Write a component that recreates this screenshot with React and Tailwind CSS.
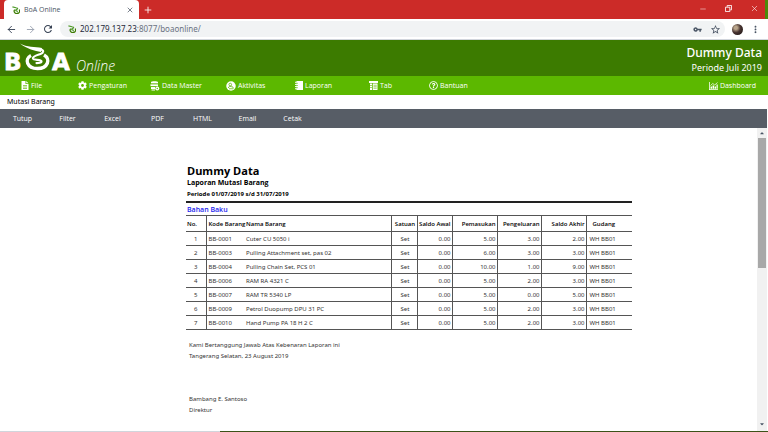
import React, { useState } from 'react';
import { ArrowLeft, ArrowRight, Minus, Plus, X } from 'lucide-react';
import { FaCaretDown, FaCaretUp, FaCog, FaRegQuestionCircle } from 'react-icons/fa';
import { MdRefresh, MdStarBorder, MdMoreVert, MdVpnKey } from 'react-icons/md';

const FileIcon = () => (
  <svg viewBox="0 0 16 18" className="h-[9px] w-2" fill="currentColor">
    <path d="M1 0h8v6h6v12H1zM10.500 0L15 4.500h-4.500z" />
    <path d="M4 9h8M4 12h8M4 15h8" stroke="#5cb800" strokeWidth="1.300" />
  </svg>
);

const DatabaseIcon = () => (
  <svg viewBox="0 0 20 20" className="h-[10px] w-[10px]" fill="currentColor">
    <path d="M2 2c0-2 14-2 14 0v3H2zM1 6.500h15v4H1zM2 12h8v4H2zM3 17h7v2H3z" />
    <circle cx="14.500" cy="15" r="4" />
    <circle cx="14.500" cy="15" r="1.400" fill="#5cb800" />
    <path d="M1 5.700h15M1 11.200h12" stroke="#5cb800" strokeWidth="1" />
  </svg>
);

const ActivityIcon = () => (
  <svg viewBox="0 0 20 20" className="h-[10px] w-[10px]">
    <circle cx="10" cy="10" r="9.500" fill="currentColor" />
    <g fill="none" stroke="#5cb800" strokeWidth="1.500">
      <circle cx="8.500" cy="7" r="2.600" />
      <path d="M4.500 14c0-4 7-4 8-1M10.500 9.500l5 4.500M6 15.500h9" />
    </g>
  </svg>
);

const NotebookIcon = () => (
  <svg viewBox="0 0 16 18" className="h-[9px] w-2" fill="currentColor">
    <path d="M3 0h13v18H3z" />
    <path d="M0 2.500h5M0 6.800h5M0 11.200h5M0 15.500h5" stroke="currentColor" strokeWidth="2" />
    <path d="M3 4.600h2.500M3 9h2.500M3 13.400h2.500" stroke="#5cb800" strokeWidth="1.500" />
  </svg>
);

const TabIcon = () => (
  <svg viewBox="0 0 18 18" className="h-[9px] w-[9px]" fill="currentColor">
    <path d="M0 0h18v4H0zM2 5h4v13H2zM7.500 5H17v13H7.500z" />
    <path d="M9 8.500h6.500M9 11.500h6.500M9 14.500h6.500M2 9h4M2 13h4" stroke="#5cb800" strokeWidth="1.200" />
  </svg>
);

const ChartIcon = () => (
  <svg viewBox="0 0 18 16" className="h-2 w-[9px]" fill="currentColor">
    <path d="M0 0h1.500v14.500H18V16H0zM3 9h3v4.500H3zM7 7h3v6.500H7zM11 9h3v4.500h-3zM15 5h2.500v8.500H15z" />
    <path d="M3 7l4.500-4 4 3L17 1" fill="none" stroke="currentColor" strokeWidth="1.500" />
  </svg>
);

const BoaIcon = () => (
  <svg viewBox="0 0 18 18" className="h-2 w-2 shrink-0" fill="none" stroke="#3c7b00">
    <path d="M6 8c-3 4 0 9 5 9s8-5 5-9" strokeWidth="2.800" />
    <path d="M1 2l8 2c6 1 4 3 1 4s-2 3 0 3 3 2 1 3" strokeWidth="2.500" stroke="#4f9a2a" />
  </svg>
);

const Logo = () => (
  <svg viewBox="0 0 70 32" className="h-8 w-[70px] overflow-visible" fill="#fff" role="img" aria-label="BoA">
    <g fontFamily="DejaVu Sans" fontWeight="700" fontSize="23" stroke="#fff" strokeWidth=".8">
      <text x="-2" y="28">B</text>
      <text x="46" y="28">A</text>
    </g>
    <path d="M25 13.500C18 17 21 26.500 31.500 26.500S45 17 38 13" fill="none" stroke="#fff" strokeWidth="3.400" />
    <path d="M14 1.500c7 4.200 15 3 22 4.400l-1 4C29 9 21 7 14 1.500z" />
    <path d="M34.500 7.500c4 .5 3 3.500 0 4.500s-8 2-7.500 4.500c.5 2 8 .6 8.500 2.800.2 1.500-3 1.800-5 1.800" fill="none" stroke="#fff" strokeWidth="2.200" strokeLinecap="round" />
  </svg>
);

const MENU = [
  { label: 'File', icon: <FileIcon />, width: 'w-[57px]' },
  { label: 'Pengaturan', icon: <FaCog className="h-[9px] w-[9px]" />, width: 'w-[72px]' },
  { label: 'Data Master', icon: <DatabaseIcon />, width: 'w-[76px]' },
  { label: 'Aktivitas', icon: <ActivityIcon />, width: 'w-[69px]' },
  { label: 'Laporan', icon: <NotebookIcon />, width: 'w-[74px]' },
  { label: 'Tab', icon: <TabIcon />, width: 'w-[60px]' },
  { label: 'Bantuan', icon: <FaRegQuestionCircle className="h-[9px] w-[9px]" />, width: 'w-[60px]' },
];

const ACTIONS = ['Tutup', 'Filter', 'Excel', 'PDF', 'HTML', 'Email', 'Cetak'];

const ROWS = [
  { code: 'BB-0001', name: 'Cuter CU 5050 i', values: [0, 5, 3, 2] },
  { code: 'BB-0003', name: 'Pulling Attachment set, pas 02', values: [0, 6, 3, 3] },
  { code: 'BB-0004', name: 'Pulling Chain Set, PCS 01', values: [0, 10, 1, 9] },
  { code: 'BB-0006', name: 'RAM RA 4321 C', values: [0, 5, 2, 3] },
  { code: 'BB-0007', name: 'RAM TR 5340 LP', values: [0, 5, 0, 5] },
  { code: 'BB-0009', name: 'Petrol Duopump DPU 31 PC', values: [0, 5, 2, 3] },
  { code: 'BB-0010', name: 'Hand Pump PA 18 H 2 C', values: [0, 5, 2, 3] },
];

const BrowserBar = () => {
  const [url, setUrl] = useState('202.179.137.23:8077/boaonline/');
  const hostEnd = url.indexOf(':');

  return (
    <div>
      <div className="flex h-[19px] items-end justify-between bg-[#cc2b28] pl-1">
        <div className="flex h-full items-center">
          <div className="flex h-full w-[135px] items-center rounded-t-[4px] bg-white pl-2 pr-[5px]">
            <BoaIcon />
            <span className="ml-1 flex-1 text-[7px] text-gray-600">BoA Online</span>
            <button aria-label="Close tab" className="text-gray-700"><X size={8} /></button>
          </div>
          <button aria-label="New tab" className="ml-1 text-white"><Plus size={10} /></button>
        </div>
        <div className="flex h-full items-center text-white">
          <button aria-label="Minimize" className="mr-[18px] pb-[2px]"><Minus size={8} strokeWidth={1.5} /></button>
          <button aria-label="Restore" className="mr-[18px] pb-[2px]">
            <svg viewBox="0 0 8 8" className="h-[7px] w-[7px]" fill="none" stroke="currentColor">
              <path d="M.5 2.500h5v5h-5zM2.500 2V.5h5v5H6" />
            </svg>
          </button>
          <button aria-label="Close" className="mr-[6px] pb-[2px]"><X size={9} strokeWidth={1.5} /></button>
          <div className="h-full w-[3px] bg-[#4c8a0a]" />
        </div>
      </div>
      <div className="flex h-[21px] items-center border-b border-gray-300 bg-white pl-[6px] text-gray-600">
        <button aria-label="Back" className="mr-2 text-gray-700"><ArrowLeft size={11} /></button>
        <button aria-label="Forward" className="mr-[6px] text-gray-400"><ArrowRight size={11} /></button>
        <button aria-label="Reload" className="text-gray-700"><MdRefresh size={12} /></button>
        <div className="ml-[6px] flex h-4 flex-1 items-center rounded-full bg-[#f1f3f4] px-2">
          <BoaIcon />
          <label className="relative ml-1 flex flex-1 items-center font-['Noto_Sans',sans-serif] text-[8px] leading-[12px]">
            <span className="text-gray-500" aria-hidden="true">
              <span className="text-gray-800">{url.slice(0, hostEnd)}</span>{url.slice(hostEnd)}
            </span>
            <input
              aria-label="Address"
              className="absolute inset-0 w-full bg-transparent text-transparent outline-none"
              value={url}
              onChange={(e) => setUrl(e.target.value)}
            />
          </label>
          <MdVpnKey size={9} />
          <MdStarBorder size={11} className="ml-2 -mr-1" />
        </div>
        <div className="ml-[7px] h-[11px] w-[11px] rounded-full bg-[radial-gradient(circle_at_35%_35%,#b9a58b_15%,#4a3632_45%,#241a18_80%)]" />
        <button aria-label="Menu" className="mx-[7px]"><MdMoreVert size={11} /></button>
      </div>
    </div>
  );
};

const ReportTable = () => {
  const cell = 'border-b border-r border-[#555]';

  return (
    <table className="w-full table-fixed border-collapse border-t border-[#555] text-[6px] leading-[8px] whitespace-nowrap">
      <colgroup>
        <col className="w-[20px]" />
        <col className="w-[40px]" />
        <col className="w-[145px]" />
        <col className="w-[26px]" />
        <col className="w-[35px]" />
        <col className="w-[45px]" />
        <col className="w-[44px]" />
        <col className="w-[45px]" />
        <col />
      </colgroup>
      <thead>
        <tr className="h-4 text-left *:font-semibold">
          <th className={`${cell} pl-px`}>No.</th>
          <th className="border-b border-[#555] pl-[2px]">Kode Barang</th>
          <th className={cell}>Nama Barang</th>
          <th className={`${cell} pl-[2px] text-center`}>Satuan</th>
          <th className={`${cell} pr-px text-right`}>Saldo Awal</th>
          <th className={`${cell} pr-px text-right`}>Pemasukan</th>
          <th className={`${cell} pr-px text-right`}>Pengeluaran</th>
          <th className={`${cell} pr-px text-right`}>Saldo Akhir</th>
          <th className="border-b border-[#555] pl-[6px]">Gudang</th>
        </tr>
      </thead>
      <tbody className="font-['Noto_Sans',sans-serif] text-[#333]">
        {ROWS.map((row, i) => (
          <tr key={row.code} className="h-[14px]">
            <td className={`${cell} text-center`}>{i + 1}</td>
            <td className="border-b border-[#555] pl-[2px]">{row.code}</td>
            <td className={cell}>{row.name}</td>
            <td className={`${cell} pl-[2px] text-center`}>Set</td>
            {row.values.map((value, j) => (
              <td key={j} className={`${cell} pr-px text-right`}>{value.toFixed(2)}</td>
            ))}
            <td className="border-b border-[#555] pl-[3px]">WH BB01</td>
          </tr>
        ))}
      </tbody>
    </table>
  );
};

export default function App() {
  return (
    <div className="flex min-h-screen flex-col bg-white font-['Open_Sans','Noto_Sans',sans-serif] text-[7px] leading-[10px] text-black">
      <BrowserBar />

      <header className="flex h-9 items-center justify-between bg-[#3c7b00] px-[6px] text-white">
        <div className="flex items-end">
          <Logo />
          <span className="text-[14px] leading-[16px] font-light italic">Online</span>
        </div>
        <div className="pt-[3px] text-right font-['Noto_Sans',sans-serif]">
          <div className="text-[12px] leading-[16px] font-medium">Dummy Data</div>
          <div className="text-[9px] leading-[14px]">Periode Juli 2019</div>
        </div>
      </header>

      <nav className="flex h-[19px] items-center justify-between bg-[#5cb800] pr-3 pl-[21px] text-white">
        <div className="flex">
          {MENU.map((item) => (
            <a key={item.label} href="#" className={`flex items-center gap-[2px] ${item.width}`}>
              {item.icon}
              {item.label}
            </a>
          ))}
        </div>
        <a href="#" className="flex items-center gap-[2px]">
          <ChartIcon />
          Dashboard
        </a>
      </nav>

      <div className="flex h-[14px] items-center pl-[7px] font-['Noto_Sans',sans-serif]">Mutasi Barang</div>

      <div className="mr-px flex h-[19px] items-center bg-[#575d66] text-white">
        {ACTIONS.map((action) => (
          <button key={action} className="w-[45px]">{action}</button>
        ))}
      </div>

      <div className="flex flex-1">
        <main className="flex-1 pl-[186px] pt-9">
          <div className="w-[446px]">
            <div className="pl-px">
              <h1 className="text-[11px] leading-[14px] font-bold">Dummy Data</h1>
              <h2 className="text-[7px] leading-[10px] font-bold">Laporan Mutasi Barang</h2>
              <p className="mt-px text-[6px] leading-[10px] font-bold">Periode 01/07/2019 s/d 31/07/2019</p>
            </div>
            <div className="mt-[2px] h-[14px] border-t-2 border-[#222] pt-[2px] pl-px font-semibold text-[#2222ee]">Bahan Baku</div>
            <ReportTable />
            <div className="mt-[10px] pl-[3px] font-['Noto_Sans',sans-serif] text-[6px] leading-[11px] text-[#333]">
              <p>Kami Bertanggung Jawab Atas Kebenaran Laporan ini</p>
              <p>Tangerang Selatan, 23 August 2019</p>
              <p className="mt-8">Bambang E. Santoso</p>
              <p>Direktur</p>
            </div>
          </div>
        </main>
        <div className="mr-px flex w-[10px] flex-col items-center bg-[#f1f1f1] text-gray-600">
          <FaCaretUp size={6} className="my-[2px]" />
          <div className="h-[130px] w-2 bg-[#a8a8a8]" />
          <FaCaretDown size={6} className="mt-auto mb-1" />
        </div>
      </div>

      <div className="flex h-px bg-[#3d5218]">
        <div className="w-[220px] bg-gray-300" />
      </div>
    </div>
  );
}
